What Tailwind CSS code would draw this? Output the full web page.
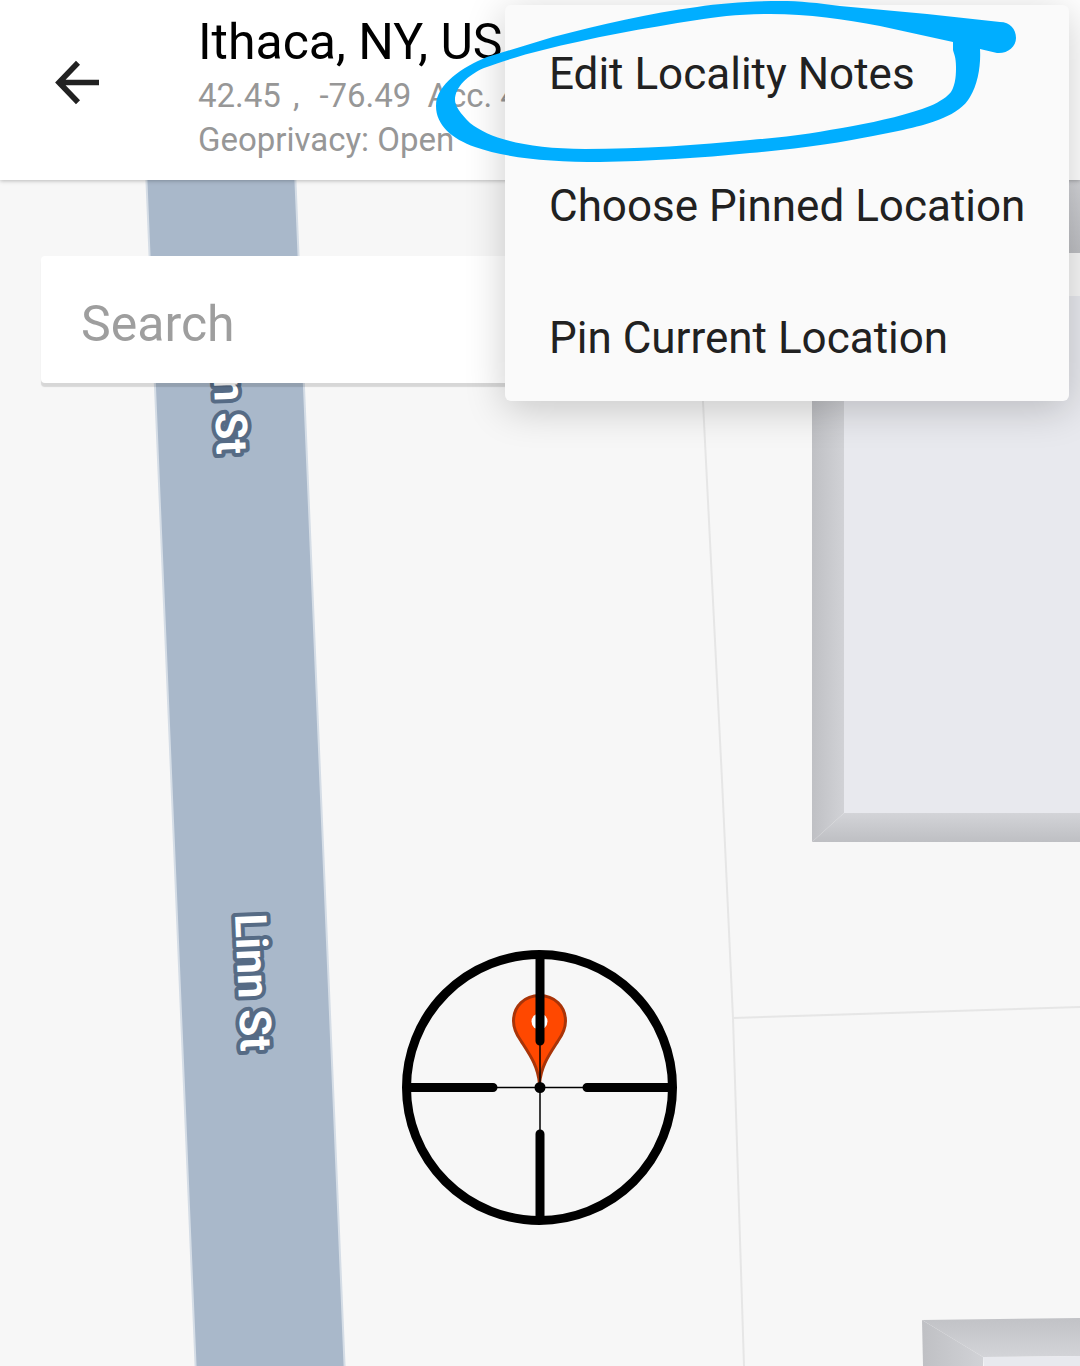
<!DOCTYPE html>
<html lang="en">
<head>
<meta charset="utf-8">
<meta name="viewport" content="width=device-width, initial-scale=1">
<title>Ithaca, NY, US</title>
<script src="https://cdn.jsdelivr.net/npm/@tailwindcss/browser@4"></script>
</head>
<body class="relative flex min-h-screen flex-col overflow-x-hidden bg-[#f7f7f7] font-[Roboto,sans-serif]">
  <header class="relative z-10 flex h-[180px] items-start bg-white shadow-[0_1px_4px_rgba(0,0,0,0.25)]">
    <button type="button" aria-label="Back" class="ml-[53px] mt-[58px] mr-[97px] size-12 shrink-0">
      <svg viewBox="0 0 48 48" class="size-12" fill="none" stroke="#212121" stroke-width="5.6">
        <path d="M46 24.500H6M25 4.800 6 24.500 25 44.200"/>
      </svg>
    </button>
    <div class="flex min-w-0 flex-col pt-3 whitespace-nowrap">
      <h1 class="text-[50px] leading-[60px] text-black">Ithaca, NY, US</h1>
      <p class="flex text-[33px] leading-[48px] text-[#979797]"><span class="mr-3">42.45</span><span class="mr-5">,</span><span class="mr-4">-76.49</span><span>Acc. 4</span></p>
      <p class="text-[33px] leading-[40px] text-[#979797]">Geoprivacy: Open</p>
    </div>
  </header>

  <main class="relative flex-1">
    <!-- Map canvas -->
    <svg class="absolute inset-0 size-full" viewBox="0 180 1080 1186" preserveAspectRatio="xMinYMin slice" role="img" aria-label="Map">
      <defs>
        <linearGradient id="wallLeft"><stop offset="0" stop-color="#bfc0c4"/><stop offset="1" stop-color="#d1d2d6"/></linearGradient>
        <linearGradient id="wallDown" x2="0" y2="1"><stop offset="0" stop-color="#d3d4d8"/><stop offset="1" stop-color="#bebfc3"/></linearGradient>
        <linearGradient id="wallUp" x2="0" y2="1"><stop offset="0" stop-color="#c1c2c6"/><stop offset="1" stop-color="#d3d4d8"/></linearGradient>
      </defs>
      <rect y="180" width="1080" height="1186" fill="#f7f7f7"/>
      <path d="M146 170H295L345 1376H196Z" fill="#a9b8ca" stroke="#d5dde6" stroke-width="2"/>
      <path d="M694 180 703 402 722 780 733 1018 744 1366M733 1018 1080 1007" fill="none" stroke="#e6e6e6" stroke-width="2"/>
      <path d="M812 180H1080V253H812Z" fill="url(#wallDown)"/>
      <path d="M844 296H1080V813H844Z" fill="#e8e9ee"/>
      <path d="M812 296H844V813L812 842Z" fill="url(#wallLeft)"/>
      <path d="M844 813H1080V842H812Z" fill="url(#wallDown)"/>
      <path d="M922 1320 983 1357V1366H923Z" fill="url(#wallLeft)"/>
      <path d="M922 1320 1080 1318V1356L983 1357Z" fill="url(#wallUp)"/>
      <path d="M983 1357 1080 1356V1366H984Z" fill="#e8e9ee"/>
      <g font-family="Roboto, sans-serif" font-size="44" font-weight="700" fill="#fff" stroke="#566b85" stroke-width="8" stroke-linejoin="round" paint-order="stroke" text-anchor="middle">
        <text transform="translate(214 386) rotate(87.6)">Linn St</text>
        <text transform="translate(238 983) rotate(87.6)">Linn St</text>
      </g>
      <!-- Marker and crosshair -->
      <path d="M539.500 1084C538 1066 530 1055 521 1041C516 1034 513.500 1029 513.500 1021C513.500 1006 525 995.500 539.500 995.500S565.500 1006 565.500 1021C565.500 1029 563 1034 558 1041C549 1055 541 1066 539.500 1084Z" fill="#ff4800" stroke="#a93408" stroke-width="3"/>
      <circle cx="539.500" cy="1021.500" r="8" fill="#fff"/>
      <g fill="none" stroke="#000" stroke-linecap="round">
        <circle cx="539.500" cy="1087.500" r="133" stroke-width="9"/>
        <path d="M540 957V1041M540 1134V1217M410 1087.500H493M587 1087.500H670" stroke-width="9"/>
        <path d="M540 1041V1134M493 1087.500H587" stroke-width="1.500"/>
      </g>
      <circle cx="540" cy="1087.500" r="5.500"/>
    </svg>

    <div class="relative mx-[41px] mt-[76px]">
      <input type="search" aria-label="Search" placeholder="Search" class="block h-[127px] w-full rounded bg-white px-10 pt-2 text-[50px] text-black shadow-[0_4px_1px_rgba(0,0,0,0.13)] outline-none placeholder:text-[#9e9e9e]">
    </div>
  </main>

  <div class="absolute top-[5px] right-[11px] z-20 flex w-[564px] flex-col rounded-md bg-[#fafafa] text-[44px] text-[#212121] shadow-[0_8px_40px_rgba(0,0,0,0.2)]" role="menu">
    <button type="button" role="menuitem" class="h-[132px] px-11 pt-[6px] text-left whitespace-nowrap">Edit Locality Notes</button>
    <button type="button" role="menuitem" class="h-[132px] px-11 pt-[6px] text-left whitespace-nowrap">Choose Pinned Location</button>
    <button type="button" role="menuitem" class="h-[132px] px-11 pt-[6px] text-left whitespace-nowrap">Pin Current Location</button>
    <!-- Hand-drawn highlight around the first entry -->
    <svg class="pointer-events-none absolute -top-[5px] -left-[75px] h-[165px] w-[590px]" viewBox="430 0 590 165" fill="#00aeff" aria-hidden="true">
      <path fill-rule="evenodd" d="M780 1C755 1 722 3 697 7C650 13 600 25 553 37L487 57C463 67 436 84 436 106C436 125 452 139 475 147C506 158 550 162 600 162C650 161 700 158 750 153C800 149 843 142 873 136C900 131 928 125 943 118C955 113 965 106 970 97C978 84 981 65 980 49L997 53C1007 54 1016 47 1016 38C1016 29 1010 22 1000 22L927 14L840 6C818 3 800 1 780 1ZM953 42L880 26C843 19 810 14 770 14C740 14 715 17 697 20C645 28 590 38 543 50C522 55 500 62 484 68C468 75 455 87 455 100C455 106 460 113 470 123C490 139 528 149 585 149C640 149 700 145 750 140C790 137 820 132 853 126C880 121 910 114 930 106C940 102 948 96 951 92C956 84 956 73 956 67C956 57 954 54 953 50Z"/>
    </svg>
  </div>
</body>
</html>
